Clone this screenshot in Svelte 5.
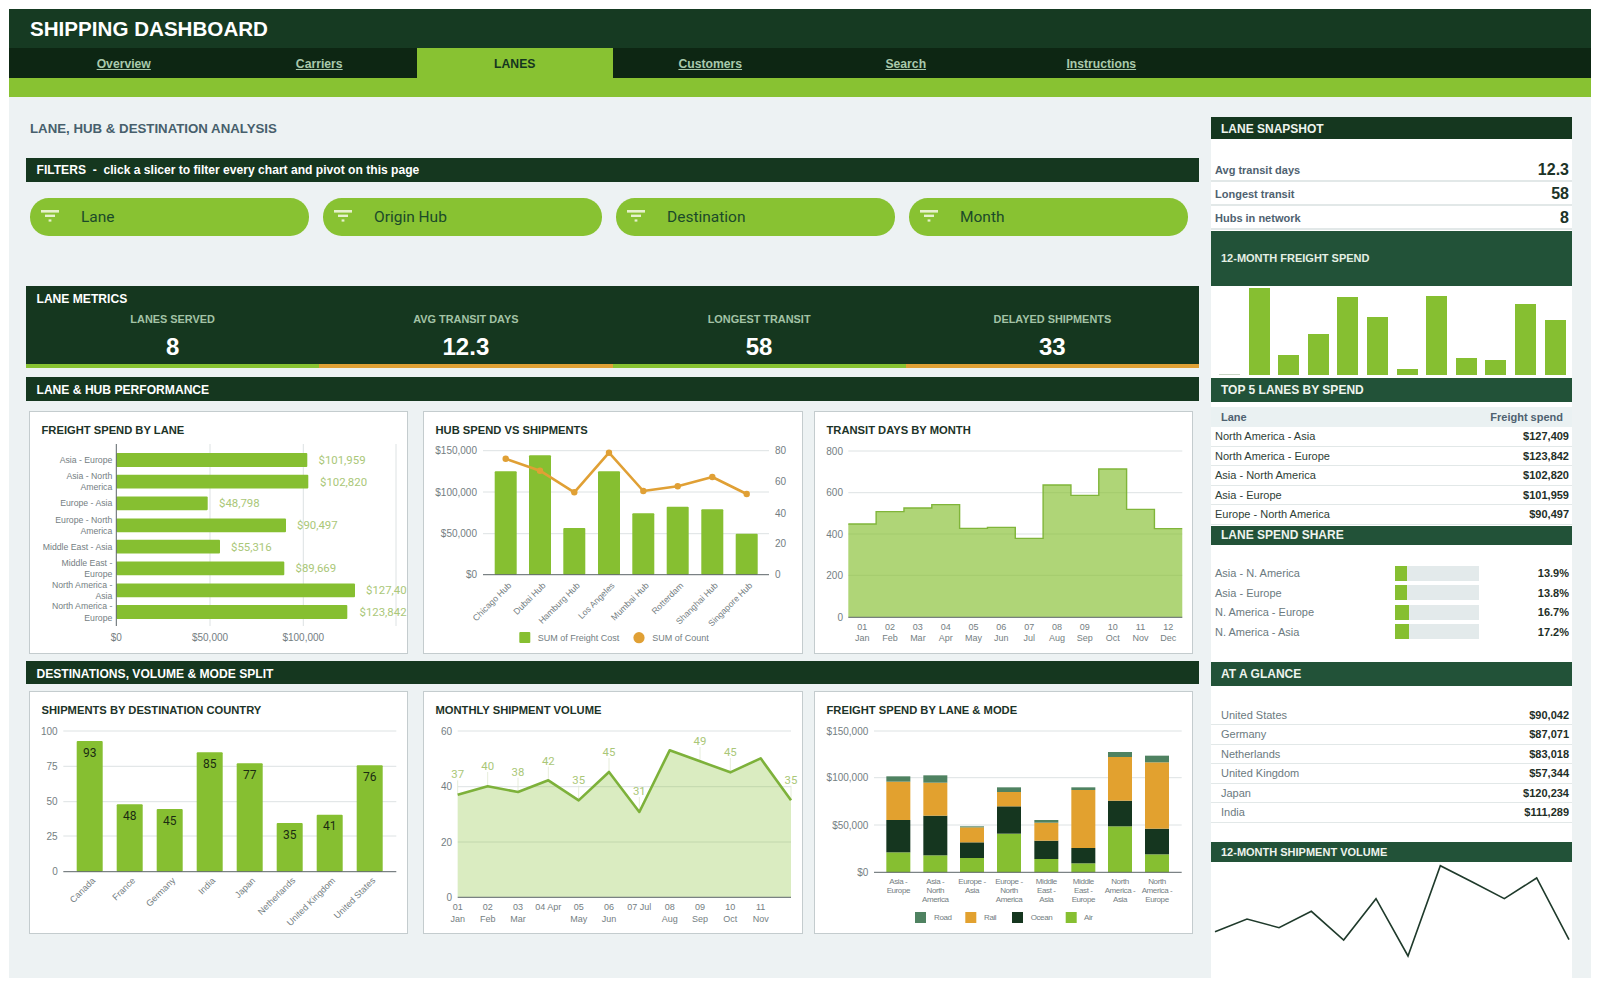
<script lang="ts">
  const tabs = ["Overview", "Carriers", "LANES", "Customers", "Search", "Instructions"];
  const slicers = ["Lane", "Origin Hub", "Destination", "Month"];
  const metrics = [
    { label: "LANES SERVED", value: "8", accent: "green" },
    { label: "AVG TRANSIT DAYS", value: "12.3", accent: "orange" },
    { label: "LONGEST TRANSIT", value: "58", accent: "green" },
    { label: "DELAYED SHIPMENTS", value: "33", accent: "orange" }
  ];
  const snapshot = [["Avg transit days", "12.3"], ["Longest transit", "58"], ["Hubs in network", "8"]];
  // bar heights in px, bottom of the strip is the baseline
  const spendBars = [1, 87, 20.5, 41.5, 78, 58.5, 6, 79, 17, 15.5, 71, 55];
  const topLanes = [
    ["North America - Asia", "$127,409"],
    ["North America - Europe", "$123,842"],
    ["Asia - North America", "$102,820"],
    ["Asia - Europe", "$101,959"],
    ["Europe - North America", "$90,497"]
  ];
  const shares = [
    ["Asia - N. America", 13.9, "13.9%"],
    ["Asia - Europe", 13.8, "13.8%"],
    ["N. America - Europe", 16.7, "16.7%"],
    ["N. America - Asia", 17.2, "17.2%"]
  ];
  const glance = [
    ["United States", "$90,042"],
    ["Germany", "$87,071"],
    ["Netherlands", "$83,018"],
    ["United Kingdom", "$57,344"],
    ["Japan", "$120,234"],
    ["India", "$111,289"]
  ];

  // freight spend by lane
  const laneBars = [
    { y: 460, end: 307.3, val: "$101,959", lx: 318.5, lines: [["Asia - Europe", 460]] },
    { y: 481.7, end: 308.3, val: "$102,820", lx: 320, lines: [["Asia - North", 476], ["America", 487.3]] },
    { y: 503.3, end: 207.7, val: "$48,798", lx: 219, lines: [["Europe - Asia", 503.3]] },
    { y: 525.3, end: 286, val: "$90,497", lx: 297, lines: [["Europe - North", 519.7], ["America", 530.7]] },
    { y: 546.7, end: 220, val: "$55,316", lx: 231, lines: [["Middle East - Asia", 546.7]] },
    { y: 568.3, end: 284.3, val: "$89,669", lx: 295.5, lines: [["Middle East -", 563], ["Europe", 574.3]] },
    { y: 590.3, end: 355, val: "$127,409", lx: 366, lines: [["North America -", 584.7], ["Asia", 595.7]] },
    { y: 612, end: 347.3, val: "$123,842", lx: 359.5, lines: [["North America -", 606.3], ["Europe", 617.7]] }
  ];

  // hub spend vs shipments
  const hubs = [
    { name: "Chicago Hub", x: 505.7, top: 471.3, ly: 458.7 },
    { name: "Dubai Hub", x: 540, top: 455.3, ly: 470.7 },
    { name: "Hamburg Hub", x: 574.3, top: 528, ly: 492.3 },
    { name: "Los Angeles", x: 609, top: 471.3, ly: 452.7 },
    { name: "Mumbai Hub", x: 643.3, top: 513.3, ly: 491 },
    { name: "Rotterdam", x: 677.7, top: 506.7, ly: 486.3 },
    { name: "Shanghai Hub", x: 712.3, top: 509.3, ly: 477 },
    { name: "Singapore Hub", x: 746.7, top: 533.7, ly: 494 }
  ];
  const hubLine = hubs.map((h) => `${h.x},${h.ly}`).join(" ");

  // transit days, stepped area
  const stepTops = [372, 335, 324, 314, 385, 382, 415, 255, 286, 207, 328, 386].map((v) => 400 + v / 3);
  const monthNames = ["Jan", "Feb", "Mar", "Apr", "May", "Jun", "Jul", "Aug", "Sep", "Oct", "Nov", "Dec"];
  const pad = (n: number) => String(n).padStart(2, "0");
  const stepX0 = 848.3;
  const stepW = 27.83;
  let stepPath = "";
  stepTops.forEach((t, i) => {
    stepPath += `${i ? "L" : "M"}${stepX0 + stepW * i},${t} L${stepX0 + stepW * (i + 1)},${t} `;
  });

  // destination country bars
  const countries = [
    ["Canada", 89.7, 183, 93],
    ["France", 129.7, 373, 48],
    ["Germany", 169.7, 387, 45],
    ["India", 209.7, 217, 85],
    ["Japan", 249.7, 250, 77],
    ["Netherlands", 289.7, 429, 35],
    ["United Kingdom", 329.7, 404, 41],
    ["United States", 369.7, 256, 76]
  ] as const;

  // monthly shipment volume
  const volume = [
    [128, 344, "37", 283],
    [218, 319, "40", 258],
    [309, 336, "38", 275],
    [400, 301, "42", 242],
    [491, 361, "35", 299],
    [582, 276, "45", 216],
    [673, 396, "31", 333],
    [764, 211, "", 0],
    [855, 244, "49", 183],
    [946, 277, "45", 216],
    [1037, 235, "", 0],
    [1128, 361, "35", 299]
  ].map(([x, y, t, ty]) => ({
    x: 415 + (x as number) / 3,
    y: 680 + (y as number) / 3,
    t: t as string,
    ty: 680 + (ty as number) / 3
  }));
  const volumeLine = volume.map((p) => `${p.x},${p.y}`).join(" ");
  const volumeArea = `${volume[0].x},897.3 ${volumeLine} ${volume[11].x},897.3`;
  const volumeTicks = [
    ["01", "Jan"], ["02", "Feb"], ["03", "Mar"], ["04 Apr", ""], ["05", "May"], ["06", "Jun"],
    ["07 Jul", ""], ["08", "Aug"], ["09", "Sep"], ["10", "Oct"], ["11", "Nov"]
  ];

  // lane & mode stacks, zoomed-crop y values: bottom, air, ocean, rail, road tops
  const modeColors = ["#86bf31", "#15361f", "#e2a12f", "#4f8261"];
  const modes = [
    { x: 280, tops: [517, 420, 305, 289], label: ["Asia -", "Europe"] },
    { x: 391, tops: [526, 407, 308, 286], label: ["Asia -", "North", "America"] },
    { x: 501, tops: [534, 487, 442, 439], label: ["Europe -", "Asia"] },
    { x: 612, tops: [461, 379, 336, 322], label: ["Europe -", "North", "America"] },
    { x: 724, tops: [537, 482, 428, 420], label: ["Middle", "East -", "Asia"] },
    { x: 835, tops: [550, 504, 330, 322], label: ["Middle", "East -", "Europe"] },
    { x: 945, tops: [439, 362, 231, 216], label: ["North", "America -", "Asia"] },
    { x: 1056, tops: [523, 446, 247, 227], label: ["North", "America -", "Europe"] }
  ];
  const modeLegend = [
    ["Road", 915, 934, "#4f8261"],
    ["Rail", 965.3, 984, "#e2a12f"],
    ["Ocean", 1012, 1030.7, "#15361f"],
    ["Air", 1065.7, 1084, "#86bf31"]
  ] as const;

  const sparkPts = [[45, 842], [141, 804], [237, 830], [334, 781], [431, 867], [528, 743], [624, 915], [721, 644], [817, 693], [913, 743], [1010, 681], [1107, 866]]
    .map(([x, y]) => `${1200 + x / 3},${650 + y / 3}`)
    .join(" ");
</script>

<div class="app">
  <header class="title">SHIPPING DASHBOARD</header>
  <nav class="tabs">
    {#each tabs as tab}
      {#if tab === "LANES"}
        <span class="tab active">{tab}</span>
      {:else}
        <a class="tab" href="#top">{tab}</a>
      {/if}
    {/each}
  </nav>
  <div class="band"></div>

  <div class="body">
    <main class="left">
      <h1>LANE, HUB &amp; DESTINATION ANALYSIS</h1>
      <div class="bar filters">FILTERS &nbsp;-&nbsp; click a slicer to filter every chart and pivot on this page</div>
      <div class="slicers">
        {#each slicers as s}
          <div class="pill">
            <svg class="funnel" width="18" height="12" viewBox="0 0 18 12">
              <rect x="0" y="0" width="18" height="2.6" fill="#e6f1cc" />
              <rect x="4" y="4.6" width="10" height="2.4" fill="#e6f1cc" />
              <rect x="7.6" y="9.4" width="2.8" height="2.2" fill="#e6f1cc" />
            </svg>
            <span>{s}</span>
          </div>
        {/each}
      </div>

      <section class="metrics">
        <div class="metrics-title">LANE METRICS</div>
        <div class="metric-row">
          {#each metrics as m}
            <div class="metric {m.accent}">
              <div class="metric-label">{m.label}</div>
              <div class="metric-value">{m.value}</div>
            </div>
          {/each}
        </div>
      </section>

      <div class="bar perf">LANE &amp; HUB PERFORMANCE</div>
      <div class="cards first">
        <div class="card">
          <h3>FREIGHT SPEND BY LANE</h3>
          <svg viewBox="30 442 377 211" width="377" height="211">
            {#each [210, 303.3, 396] as x}
              <line class="grid" x1={x} x2={x} y1="444" y2="626" />
            {/each}
            {#each laneBars as b}
              <rect x="116.3" y={b.y - 6.9} width={b.end - 116.3} height="13.8" rx="1" fill="#86bf31" />
              <text class="val" x={b.lx} y={b.y}>{b.val}</text>
              {#each b.lines as [t, y]}
                <text class="tick slim end" x="112.3" y={y}>{t}</text>
              {/each}
            {/each}
            <line class="axis" x1="116.3" x2="116.3" y1="444" y2="626" />
            <text class="tick big mid" x="116.3" y="637">$0</text>
            <text class="tick big mid" x="210" y="637">$50,000</text>
            <text class="tick big mid" x="303.3" y="637">$100,000</text>
          </svg>
        </div>

        <div class="card">
          <h3>HUB SPEND VS SHIPMENTS</h3>
          <svg viewBox="424 442 378 211" width="378" height="211">
            {#each [[450.7, "$150,000"], [492, "$100,000"], [533.7, "$50,000"]] as [y, l]}
              <line class="grid" x1="483" x2="769" y1={y} y2={y} />
              <text class="tick big end" x="477" y={y}>{l}</text>
            {/each}
            <text class="tick big end" x="477" y="574.7">$0</text>
            {#each [[450.7, "80"], [481.7, "60"], [513, "40"], [543.7, "20"], [574.7, "0"]] as [y, l]}
              <text class="tick big" x="775" y={y}>{l}</text>
            {/each}
            {#each hubs as h}
              <rect x={h.x - 11} y={h.top} width="22" height={574.7 - h.top} rx="1" fill="#86bf31" />
              <text class="tick slim end" x={h.x + 4} y="584" transform="rotate(-45 {h.x + 4} 584)">{h.name}</text>
            {/each}
            <line class="axis" x1="483" x2="769" y1="574.7" y2="574.7" />
            <polyline points={hubLine} fill="none" stroke="#e0a035" stroke-width="2.6" stroke-linejoin="round" />
            {#each hubs as h}
              <circle cx={h.x} cy={h.ly} r="3.2" fill="#e0a035" />
            {/each}
            <rect x="519.3" y="632" width="11" height="11" rx="1" fill="#86bf31" />
            <text class="tick" x="537.7" y="637.7">SUM of Freight Cost</text>
            <circle cx="639" cy="637.7" r="5.6" fill="#e0a035" />
            <text class="tick" x="652.3" y="637.7">SUM of Count</text>
          </svg>
        </div>

        <div class="card">
          <h3>TRANSIT DAYS BY MONTH</h3>
          <svg viewBox="815 442 377 211" width="377" height="211">
            {#each [[451, "800"], [492.7, "600"], [534, "400"], [575.3, "200"]] as [y, l]}
              <line class="grid" x1="848.3" x2="1182.3" y1={y} y2={y} />
              <text class="tick big end" x="843" y={y}>{l}</text>
            {/each}
            <text class="tick big end" x="843" y="617.3">0</text>
            <path d="{stepPath} L1182.3,617.3 L848.3,617.3 Z" fill="#86bf31" fill-opacity="0.66" />
            <path d={stepPath} fill="none" stroke="#80b53a" stroke-width="1.4" />
            <line class="axis" x1="848.3" x2="1182.3" y1="617.3" y2="617.3" />
            {#each monthNames as m, i}
              <text class="tick mid" x={stepX0 + stepW * (i + 0.5)} y="627">{pad(i + 1)}</text>
              <text class="tick mid" x={stepX0 + stepW * (i + 0.5)} y="638.3">{m}</text>
            {/each}
          </svg>
        </div>
      </div>

      <div class="bar dest">DESTINATIONS, VOLUME &amp; MODE SPLIT</div>
      <div class="cards second">
        <div class="card">
          <h3>SHIPMENTS BY DESTINATION COUNTRY</h3>
          <svg viewBox="30 722 377 211" width="377" height="211">
            {#each [[731, "100"], [766.3, "75"], [801.7, "50"], [836, "25"]] as [y, l]}
              <line class="grid" x1="63.3" x2="396.3" y1={y} y2={y} />
              <text class="tick big end" x="57.7" y={y}>{l}</text>
            {/each}
            <text class="tick big end" x="57.7" y="871.7">0</text>
            {#each countries as [name, x, top, n]}
              <rect x={x - 13} y={680 + top / 3} width="26" height={871.7 - 680 - top / 3} rx="1" fill="#86bf31" />
              <text class="inner" x={x} y={680 + top / 3 + 11.5}>{n}</text>
              <text class="tick end" x={x + 4} y="879" transform="rotate(-45 {x + 4} 879)">{name}</text>
            {/each}
            <line class="axis" x1="63.3" x2="396.3" y1="871.7" y2="871.7" />
          </svg>
        </div>

        <div class="card">
          <h3>MONTHLY SHIPMENT VOLUME</h3>
          <svg viewBox="424 722 378 211" width="378" height="211">
            {#each [[731, "60"], [786.7, "40"], [842, "20"]] as [y, l]}
              <line class="grid" x1="457.7" x2="791" y1={y} y2={y} />
              <text class="tick big end" x="452" y={y}>{l}</text>
            {/each}
            <text class="tick big end" x="452" y="897.3">0</text>
            <polygon points={volumeArea} fill="#86bf31" fill-opacity="0.3" />
            {#each volume as p}
              {#if p.t}
                <line x1={p.x} x2={p.x} y1={p.ty + 6} y2={p.y} stroke="#dfe8d0" stroke-width="0.8" />
                <text class="val mid" x={p.x} y={p.ty}>{p.t}</text>
              {/if}
            {/each}
            <polyline points={volumeLine} fill="none" stroke="#7db13a" stroke-width="2.6" stroke-linejoin="round" />
            <line class="axis" x1="457.7" x2="791" y1="897.3" y2="897.3" />
            {#each volumeTicks as [a, b], i}
              <text class="tick mid" x={volume[i].x} y="907.3">{a}</text>
              {#if b}<text class="tick mid" x={volume[i].x} y="918.5">{b}</text>{/if}
            {/each}
          </svg>
        </div>

        <div class="card">
          <h3>FREIGHT SPEND BY LANE &amp; MODE</h3>
          <svg viewBox="815 722 377 211" width="377" height="211">
            {#each [[731, "$150,000"], [777.7, "$100,000"], [825, "$50,000"]] as [y, l]}
              <line class="grid" x1="874" x2="1181.7" y1={y} y2={y} />
              <text class="tick big end" x="868.3" y={y}>{l}</text>
            {/each}
            <text class="tick big end" x="868.3" y="872.3">$0</text>
            {#each modes as s}
              {#each s.tops as top, i}
                <rect
                  x={805 + s.x / 3 - 12}
                  y={680 + top / 3}
                  width="24"
                  height={((i ? s.tops[i - 1] : 577) - top) / 3}
                  fill={modeColors[i]}
                />
              {/each}
              {#each s.label as t, i}
                <text class="tick tight mid" x={805 + s.x / 3} y={881 + i * 9.4}>{t}</text>
              {/each}
            {/each}
            <line class="axis" x1="874" x2="1181.7" y1="872.3" y2="872.3" />
            {#each modeLegend as [t, sx, tx, c]}
              <rect x={sx} y="912" width="11" height="11" fill={c} />
              <text class="tick tight" x={tx} y="917.7">{t}</text>
            {/each}
          </svg>
        </div>
      </div>
    </main>

    <aside class="side">
      <div class="side-head dark">LANE SNAPSHOT</div>
      <div class="snapshot">
        {#each snapshot as [k, v]}
          <div class="snap-row"><span>{k}</span><b>{v}</b></div>
        {/each}
      </div>
      <div class="spend-title">12-MONTH FREIGHT SPEND</div>
      <div class="spend-bars">
        {#each spendBars as h, i}
          <i class:faint={i === 0} style="height:{h}px"></i>
        {/each}
      </div>

      <div class="side-head top5">TOP 5 LANES BY SPEND</div>
      <div class="table-head"><span>Lane</span><span>Freight spend</span></div>
      {#each topLanes as [k, v]}
        <div class="lane-row"><span>{k}</span><b>{v}</b></div>
      {/each}

      <div class="side-head share-head">LANE SPEND SHARE</div>
      <div class="shares">
        {#each shares as [k, pct, v]}
          <div class="share-row">
            <span>{k}</span>
            <div class="track"><div class="fill" style="width:{pct}%"></div></div>
            <b>{v}</b>
          </div>
        {/each}
      </div>

      <div class="side-head glance-head">AT A GLANCE</div>
      <div class="glance">
        {#each glance as [k, v]}
          <div class="glance-row"><span>{k}</span><b>{v}</b></div>
        {/each}
      </div>

      <div class="side-head volume-head">12-MONTH SHIPMENT VOLUME</div>
      <svg class="spark" viewBox="1211 861 361 117" width="361" height="117">
        <polyline points={sparkPts} fill="none" stroke="#1f3a2b" stroke-width="1.6" />
      </svg>
    </aside>
  </div>
</div>

<style>
  :global(body) {
    margin: 0;
    background: #fff;
  }

  .app {
    margin: 9px 9px 0;
    width: 1582px;
    height: 969px;
    font-family: "Liberation Sans", Arial, sans-serif;
    overflow: hidden;
  }

  .title {
    height: 39px;
    line-height: 39px;
    padding-left: 21px;
    background: #163a22;
    color: #fff;
    font-size: 20.6px;
    font-weight: 700;
  }

  .tabs {
    display: flex;
    height: 30px;
    padding-left: 17px;
    background: #0d2613;
  }

  .tab {
    width: 195.5px;
    line-height: 32px;
    text-align: center;
    font-size: 12.2px;
    font-weight: 700;
    color: #a9c9ac;
  }

  .tab.active {
    background: #88c232;
    color: #15361f;
    text-decoration: none;
  }

  .band {
    height: 19px;
    background: #88c232;
  }

  .body {
    display: flex;
    height: 881px;
    padding-left: 17px;
    gap: 12px;
    background: #edf2f3;
  }

  .left {
    width: 1173px;
  }

  h1 {
    margin: 22px 0 18.5px;
    padding-left: 4px;
    font-size: 13.25px;
    line-height: 20px;
    color: #475f6c;
  }

  .bar {
    display: flex;
    align-items: center;
    padding-left: 10.5px;
    background: #15371f;
    color: #fff;
    font-size: 12.1px;
    font-weight: 700;
    white-space: pre;
    box-sizing: border-box;
  }

  .filters {
    height: 24.5px;
    padding-top: 1px;
    font-size: 12.1px;
  }

  .perf {
    height: 24px;
    margin-top: 9px;
    padding-top: 1px;
  }

  .dest {
    height: 23px;
    margin-top: 7px;
    padding-top: 2px;
  }

  .slicers {
    display: flex;
    gap: 14px;
    margin: 16px 0 50.5px 3.5px;
  }

  .pill {
    display: flex;
    align-items: center;
    width: 279px;
    height: 37.5px;
    padding-left: 11.5px;
    box-sizing: border-box;
    border-radius: 18.75px;
    background: #88c232;
    color: #1b4a29;
    font-family: Roboto, sans-serif;
    font-size: 15.5px;
  }

  .funnel {
    margin-right: 22px;
    margin-top: -1px;
  }

  .metrics {
    height: 82px;
    background: #15371f;
    color: #fff;
  }

  .metrics-title {
    padding: 5px 0 0 10.5px;
    line-height: 16px;
    font-size: 12.1px;
    font-weight: 700;
  }

  .metric-row {
    display: grid;
    grid-template-columns: repeat(4, 1fr);
    margin-top: 5px;
  }

  .metric {
    height: 52px;
    text-align: center;
    box-sizing: content-box;
    border-bottom: 4px solid #88c232;
  }

  .metric.orange {
    border-bottom-color: #e0a035;
  }

  .metric-label {
    line-height: 14px;
    font-size: 10.9px;
    font-weight: 700;
    color: #a3c3a6;
  }

  .metric-value {
    margin-top: 7px;
    line-height: 28px;
    font-size: 24px;
    font-weight: 700;
  }

  .cards {
    display: flex;
    margin-left: 3px;
  }

  .cards.first {
    margin-top: 10px;
  }

  .cards.second {
    margin-top: 7px;
  }

  .card {
    width: 379px;
    height: 243px;
    box-sizing: border-box;
    border: 1px solid #c4ccce;
    background: #fff;
    overflow: hidden;
  }

  .card:nth-child(2) {
    width: 380px;
    margin-left: 15px;
  }

  .card:nth-child(3) {
    margin-left: 11px;
  }

  .card h3 {
    height: 30px;
    margin: 0;
    padding: 12px 0 0 11.5px;
    box-sizing: border-box;
    line-height: 12px;
    font-size: 11.2px;
    color: #1c3327;
  }

  .card svg {
    display: block;
  }

  text {
    font-family: Roboto, "Liberation Sans", sans-serif;
    dominant-baseline: central;
  }

  .tick {
    font-size: 9px;
    fill: #747e82;
    font-family: "Liberation Sans", sans-serif;
  }

  .slim {
    font-size: 8.7px;
  }

  .big {
    font-size: 10px;
  }

  .tight {
    font-size: 8px;
    letter-spacing: -0.4px;
  }

  .end {
    text-anchor: end;
  }

  .mid {
    text-anchor: middle;
  }

  .val {
    font-size: 11.4px;
    fill: #aac778;
  }

  .inner {
    font-size: 12px;
    fill: #1b2c12;
    text-anchor: middle;
  }

  .grid {
    stroke: #dde2e3;
    stroke-width: 1;
  }

  .axis {
    stroke: #5c6468;
    stroke-width: 1;
  }

  .side {
    width: 361px;
    margin-top: 20px;
    background: #fff;
    font-size: 11px;
  }

  .side-head {
    display: flex;
    align-items: center;
    padding-left: 10px;
    background: #225238;
    color: #eef4ee;
    font-size: 12px;
    font-weight: 700;
    box-sizing: border-box;
  }

  .dark {
    height: 22px;
    padding-top: 1px;
    background: #15371f;
  }

  .snapshot {
    padding-top: 19px;
  }

  .snap-row {
    display: flex;
    justify-content: space-between;
    align-items: center;
    height: 24px;
    padding: 1px 3px 0 4px;
    box-sizing: border-box;
    border-bottom: 2px solid #e2e8e8;
    font-weight: 700;
    color: #4f6270;
  }

  .snap-row b {
    font-size: 16px;
    color: #1c3327;
  }

  .spend-title {
    display: flex;
    align-items: center;
    height: 55px;
    margin-top: 1px;
    padding: 0 0 2px 10px;
    box-sizing: border-box;
    background: #225238;
    color: #e4efe4;
    font-weight: 700;
  }

  .spend-bars {
    display: flex;
    align-items: flex-end;
    gap: 8.6px;
    height: 89px;
    padding-left: 8px;
  }

  .spend-bars i {
    display: block;
    width: 21px;
    background: #86bf31;
  }

  .spend-bars i.faint {
    background: #c9d6c4;
  }

  .top5 {
    height: 24px;
    margin-top: 2.5px;
  }

  .table-head {
    display: flex;
    justify-content: space-between;
    align-items: center;
    height: 20px;
    margin-top: 5.5px;
    padding: 0 9px 0 10px;
    background: #eaf1f2;
    color: #4f6270;
    font-weight: 700;
  }

  .lane-row,
  .glance-row {
    display: flex;
    justify-content: space-between;
    align-items: center;
    height: 19.5px;
    padding: 0 3px 0 4px;
    box-sizing: border-box;
    border-bottom: 1.5px solid #e2e8e8;
    color: #2e3e36;
  }

  .lane-row b,
  .glance-row b,
  .share-row b {
    color: #1f2f27;
  }

  .share-head {
    height: 19.5px;
    margin-top: 1px;
  }

  .shares {
    margin-top: 18.5px;
  }

  .share-row {
    display: grid;
    grid-template-columns: 180px 84px 1fr;
    align-items: center;
    height: 19.5px;
    padding: 0 3px 0 4px;
    color: #6b7a80;
  }

  .share-row b {
    text-align: right;
  }

  .track {
    height: 15px;
    background: #e3eaeb;
  }

  .fill {
    height: 100%;
    background: #86bf31;
  }

  .glance-head {
    height: 24px;
    margin-top: 20.5px;
  }

  .glance {
    margin-top: 19.5px;
  }

  .glance-row {
    padding-left: 10px;
    color: #6b7a80;
  }

  .volume-head {
    height: 20px;
    margin-top: 19.5px;
    font-size: 11px;
  }

  .spark {
    display: block;
  }
</style>
